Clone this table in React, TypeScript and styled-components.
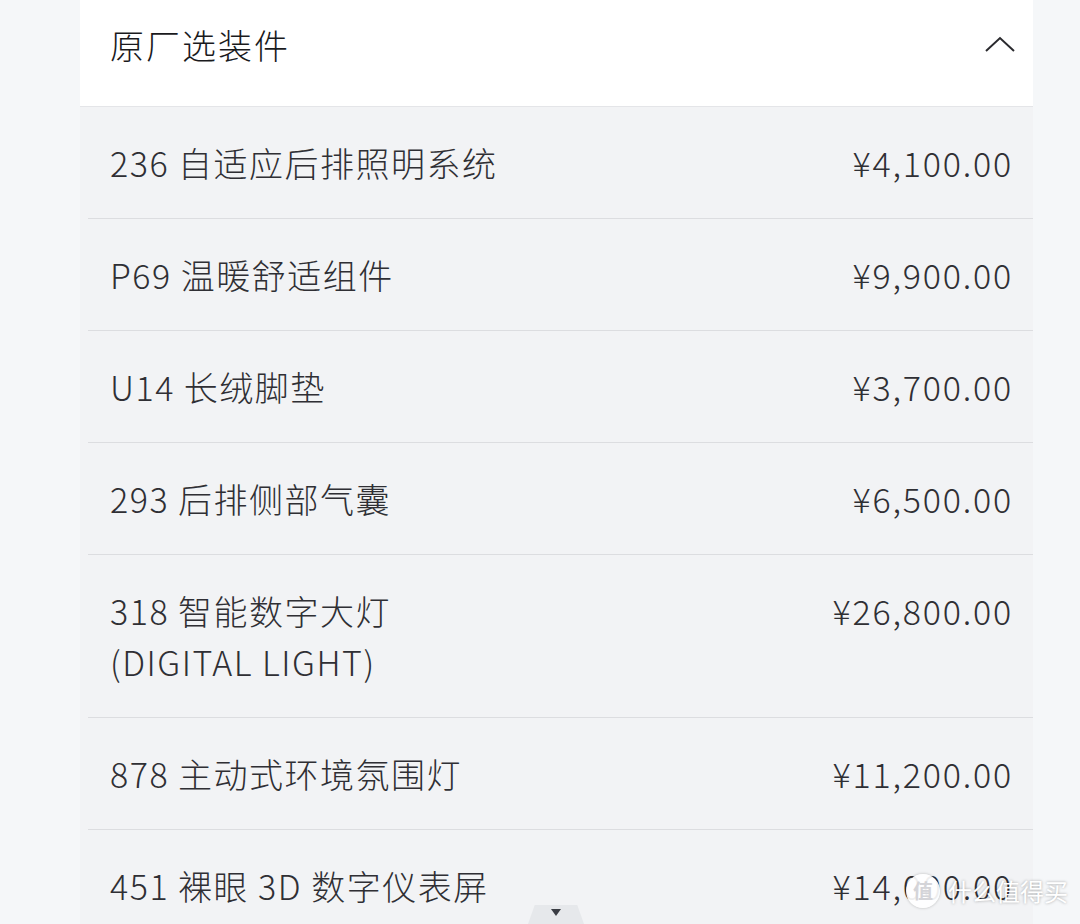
import React from "react";
import styled, { createGlobalStyle } from "styled-components";

const Global = createGlobalStyle`
  html, body { margin: 0; padding: 0; background: #f5f7f9; overflow: hidden; }
  body { font-family: "Noto Sans CJK SC", "Noto Sans", sans-serif; }
`;

const Page = styled.div`
  position: relative;
  width: 1080px;
  height: 924px;
  overflow: hidden;
  background: #f5f7f9;
`;

const Card = styled.section`
  margin-left: 80px;
  width: 953px;
`;

const Header = styled.header`
  background: #ffffff;
  border-bottom: 1px solid #e4e5e8;
  display: flex;
  align-items: center;
  justify-content: space-between;
  padding: 0 18px 18px 30px;
  box-sizing: border-box;
  height: 107px;
`;

const Title = styled.h2`
  margin: 0;
  font-size: 34px;
  font-weight: 300;
  letter-spacing: 2px;
  color: #1a1a1d;
`;

const List = styled.div`
  background: #f2f3f5;
`;

const Row = styled.div`
  display: flex;
  justify-content: space-between;
  align-items: flex-start;
  margin-left: 8px;
  padding: 30px 20px 30px 22px;
  border-bottom: 1px solid #dcdde0;
  font-size: 34px;
  font-weight: 300;
  line-height: 51px;
  color: #2f2f34;
`;

const Name = styled.div`
  white-space: pre-line;
  letter-spacing: 1.5px;
`;

const Price = styled.div`
  text-align: right;
  letter-spacing: 1.8px;
`;

const Tab = styled.div`
  position: absolute;
  left: 528px;
  bottom: 0;
  width: 56px;
  height: 19px;
  background: #e6e8eb;
  clip-path: polygon(12% 0, 88% 0, 100% 100%, 0 100%);
  display: flex;
  justify-content: center;
  padding-top: 4px;
  box-sizing: border-box;
`;

const Watermark = styled.div`
  position: absolute;
  left: 906px;
  top: 873px;
  display: flex;
  align-items: center;
  gap: 8px;
  color: #ffffff;
  font-size: 24px;
  text-shadow: 0 0 3px rgba(0, 0, 0, 0.35);
`;

const Logo = styled.div`
  width: 34px;
  height: 34px;
  border-radius: 50%;
  background: rgba(255, 255, 255, 0.92);
  box-shadow: 0 0 3px rgba(0, 0, 0, 0.25);
  display: flex;
  align-items: center;
  justify-content: center;
  color: #d4d4d8;
  font-size: 20px;
  font-weight: 700;
  text-shadow: none;
`;

const items = [
  ["236 自适应后排照明系统", "¥4,100.00"],
  ["P69 温暖舒适组件", "¥9,900.00"],
  ["U14 长绒脚垫", "¥3,700.00"],
  ["293 后排侧部气囊", "¥6,500.00"],
  ["318 智能数字大灯\n(DIGITAL LIGHT)", "¥26,800.00"],
  ["878 主动式环境氛围灯", "¥11,200.00"],
  ["451 裸眼 3D 数字仪表屏", "¥14,000.00"],
];

export default function App() {
  return (
    <Page>
      <Global />
      <Card>
        <Header>
          <Title>原厂选装件</Title>
          <svg width="30" height="16" viewBox="0 0 30 16" fill="none">
            <polyline points="1,15 15,2 29,15" stroke="#2a2a2e" strokeWidth="2" />
          </svg>
        </Header>
        <List>
          {items.map(([n, p]) => (
            <Row key={n}>
              <Name>{n}</Name>
              <Price>{p}</Price>
            </Row>
          ))}
        </List>
      </Card>
      <Tab>
        <svg width="10" height="7" viewBox="0 0 10 7">
          <polygon points="0,0 10,0 5,7" fill="#3a3d44" />
        </svg>
      </Tab>
      <Watermark>
        <Logo>值</Logo>
        <span>什么值得买</span>
      </Watermark>
    </Page>
  );
}
